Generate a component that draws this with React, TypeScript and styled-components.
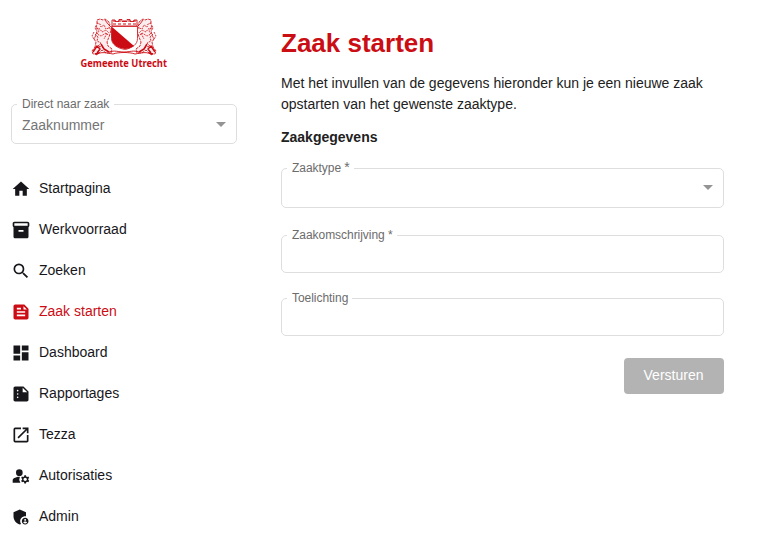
import React from 'react';
import styled, { createGlobalStyle } from 'styled-components';
import {
  MdHome,
  MdInventory2,
  MdSearch,
  MdFeed,
  MdDashboard,
  MdSummarize,
  MdOpenInNew,
  MdManageAccounts,
  MdAdminPanelSettings,
} from 'react-icons/md';
import type { IconType } from 'react-icons';

const GlobalStyle = createGlobalStyle`
  * { box-sizing: border-box; }
  body {
    margin: 0;
    background: #fff;
    color: #212121;
    font-family: "Liberation Sans", Arial, sans-serif;
    font-size: 14px;
  }
`;

const Page = styled.div`
  display: flex;
  height: 556px;
  overflow: hidden;
`;

const Sidebar = styled.aside`
  display: flex;
  flex-direction: column;
  width: 248px;
  padding: 18px 11px 0;
`;

const LogoLink = styled.div`
  display: flex;
  justify-content: center;
  height: 86px;
`;

const LogoSvg = styled.svg`
  overflow: visible;
`;

const Main = styled.main`
  display: flex;
  flex-direction: column;
  width: 476px;
  padding: 28px 0 0 33px;
`;

const Field = styled.div<{ $height: number }>`
  position: relative;
  display: flex;
  flex: none;
  align-items: center;
  height: ${(p) => p.$height}px;
  padding: 0 10px;
  border: 1px solid #dedede;
  border-radius: 5px;
  color: #757575;
`;

const Placeholder = styled.span`
  padding-top: 2px;
`;

const FieldLabel = styled.label<{ $tight?: boolean }>`
  position: absolute;
  top: -9px;
  left: 5px;
  padding: 0 ${(p) => (p.$tight ? 4 : 5)}px 0 5px;
  background: #fff;
  color: #6c6c6c;
  font-size: 12px;
  letter-spacing: ${(p) => (p.$tight ? '-0.04px' : 'normal')};
  line-height: 16px;
  white-space: nowrap;
`;

const Star = styled.span`
  font-size: 14px;
  line-height: 12px;
`;

const Caret = styled.span<{ $low?: boolean }>`
  width: 0;
  height: 0;
  margin: ${(p) => (p.$low ? '1px 0 0' : '0 0 1px')} auto;
  margin-right: 0;
  border: 5px solid transparent;
  border-top-color: #949494;
  border-bottom: 0;
`;

const Nav = styled.nav`
  display: flex;
  flex-direction: column;
  padding-top: 23px;
`;

const NavItem = styled.a<{ $active?: boolean }>`
  display: flex;
  align-items: center;
  gap: 8px;
  height: 41px;
  color: ${(p) => (p.$active ? '#cc0c14' : '#17171b')};

  svg {
    flex: none;
    width: 20px;
    height: 20px;
    margin-top: 2px;
  }
`;

const Title = styled.h1`
  margin: 0;
  color: #cb0d14;
  font-size: 26px;
  font-weight: 700;
  line-height: 30px;
`;

const Intro = styled.p`
  margin: 15px 0 0;
  line-height: 21px;
`;

const SectionTitle = styled.h2`
  margin: 12px 0 20px;
  font-size: 14px;
  line-height: 21px;
`;

const Form = styled.form`
  display: flex;
  flex-direction: column;
`;

const FieldGap = styled.div<{ $size: number }>`
  height: ${(p) => p.$size}px;
`;

const Submit = styled.button`
  align-self: flex-end;
  width: 100px;
  height: 36px;
  padding: 0 1px 2px 0;
  border: 0;
  border-radius: 4px;
  background: #b3b3b3;
  color: #fff;
  font: 14px "Liberation Sans", Arial, sans-serif;
`;

const Lion = () => (
  <g fill="none" stroke="#cc0c14" strokeWidth="0.85" strokeLinejoin="round">
    <path
      d="M17 2l3-1 3 1 2-1 3 2 2 3-1 3 2 3-1 4-1 3-2 5 1 4 4 3-1 4h-5l-4-3-4 4h-5l-1-3 3-4 1-5-2-3 2-4 1-4-2-3 2-4z"
      fill="#cc0c14"
      fillOpacity="0.08"
      strokeDasharray="3 0.8"
    />
    <path d="M17 5l3 1 1 3 3-2 2 4 3-1M16 10l4 1 2 3 4-2 3 3M16 8l3 5-2 3 4 2 5-3 2 2" strokeDasharray="1.600 1" />
    <path d="M15 16l3 3-1 4 4 2-3 3 4 1 3 3M14 14l-2 4 2 3M27 15l-3 6" strokeDasharray="2 1" />
    <path d="M13 34l4-6 3 3-3 4M21 26l3 5 5 3M15 36l4-1" strokeWidth="1.500" />
    <path d="M25 2l3 4 3 3" />
  </g>
);

const Logo = () => (
  <LogoSvg width="88" height="54" viewBox="0 0 88 54" aria-label="Gemeente Utrecht">
    <Lion />
    <g transform="matrix(-1 0 0 1 88 0)">
      <Lion />
    </g>
    <path d="M32 2h3v1.500h4V1.500h3v2h5v-2h3v2h4V2h3v6H32z" fill="#fff" stroke="#cc0c14" strokeWidth="0.9" />
    <path d="M33 3h24M33 6h24" stroke="#cc0c14" strokeWidth="1.200" strokeDasharray="3 2" />
    <path d="M31.500 8.500h26v12c0 6-5 9-12 11-8-1-14-5-14-11z" fill="#fff" stroke="#cc0c14" strokeWidth="0.8" />
    <path d="M31.500 8.500l22.500 19.500c-3 2-6 3-9 3-8-1-13.500-5-13.500-11z" fill="#cc0c14" />
    <path
      d="M16 37c5-4 11-2 17-1 5-2 17-2 22 0 6-1 12-3 17 1M29 34c6-2 9 0 15 0s9-2 15 0"
      fill="none"
      stroke="#cc0c14"
      strokeWidth="0.9"
    />
    <text
      x="0.500"
      y="49"
      fill="#cc0c14"
      fontFamily="'Noto Sans', sans-serif"
      fontSize="10"
      fontWeight="700"
      textLength="86.500"
      lengthAdjust="spacingAndGlyphs"
    >
      Gemeente Utrecht
    </text>
  </LogoSvg>
);

const items: { label: string; icon: IconType; active?: boolean }[] = [
  { label: 'Startpagina', icon: MdHome },
  { label: 'Werkvoorraad', icon: MdInventory2 },
  { label: 'Zoeken', icon: MdSearch },
  { label: 'Zaak starten', icon: MdFeed, active: true },
  { label: 'Dashboard', icon: MdDashboard },
  { label: 'Rapportages', icon: MdSummarize },
  { label: 'Tezza', icon: MdOpenInNew },
  { label: 'Autorisaties', icon: MdManageAccounts },
  { label: 'Admin', icon: MdAdminPanelSettings },
];

export default function App() {
  return (
    <>
      <GlobalStyle />
      <Page>
        <Sidebar>
          <LogoLink>
            <Logo />
          </LogoLink>
          <Field $height={40}>
            <FieldLabel>Direct naar zaak</FieldLabel>
            <Placeholder>Zaaknummer</Placeholder>
            <Caret $low />
          </Field>
          <Nav>
            {items.map(({ label, icon: Icon, active }) => (
              <NavItem key={label} $active={active}>
                <Icon />
                {label}
              </NavItem>
            ))}
          </Nav>
        </Sidebar>
        <Main>
          <Title>Zaak starten</Title>
          <Intro>
            Met het invullen van de gegevens hieronder kun je een nieuwe zaak opstarten van het gewenste zaaktype.
          </Intro>
          <SectionTitle>Zaakgegevens</SectionTitle>
          <Form>
            <Field $height={40}>
              <FieldLabel $tight>
                Zaaktype <Star>*</Star>
              </FieldLabel>
              <Caret />
            </Field>
            <FieldGap $size={27} />
            <Field $height={38}>
              <FieldLabel $tight>Zaakomschrijving *</FieldLabel>
            </Field>
            <FieldGap $size={25} />
            <Field $height={38}>
              <FieldLabel $tight>Toelichting</FieldLabel>
            </Field>
            <FieldGap $size={22} />
            <Submit type="button">Versturen</Submit>
          </Form>
        </Main>
      </Page>
    </>
  );
}
